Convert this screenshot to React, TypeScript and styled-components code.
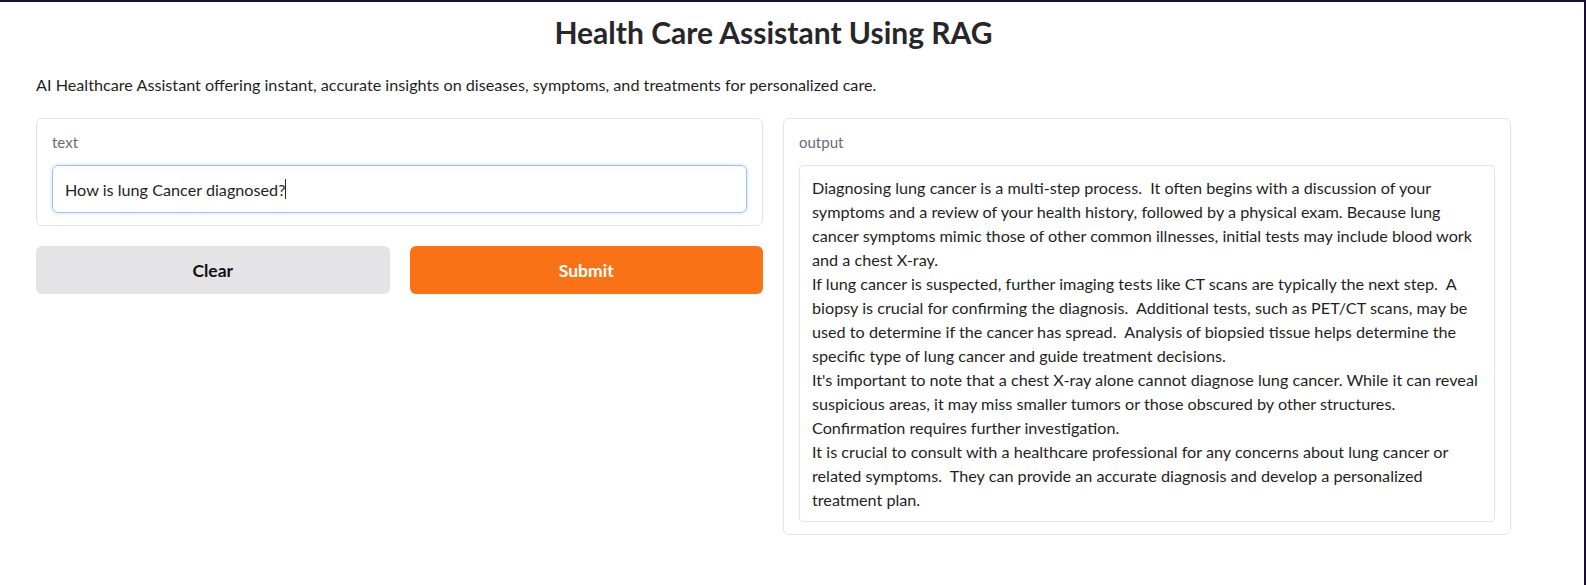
import React from "react";
import styled, { createGlobalStyle } from "styled-components";

const Global = createGlobalStyle`
  html, body { margin: 0; padding: 0; background: #ffffff; }
  body { font-family: "Lato", "Noto Sans", sans-serif; color: #1f1f23; }
  * { box-sizing: border-box; }
`;

const Frame = styled.div`
  width: 1586px;
  height: 585px;
  border-top: 2px solid #170f35;
  border-right: 2px solid #170f35;
  background: #ffffff;
  overflow: hidden;
`;

const Container = styled.div`
  width: 1475px;
  margin-left: 36px;
  display: flex;
  flex-direction: column;
`;

const Title = styled.h1`
  margin: 12px 0 0 0;
  text-align: center;
  font-size: 30px;
  line-height: 36px;
  font-weight: 700;
  color: #27272a;
`;

const Description = styled.p`
  margin: 23px 0 0 0;
  font-size: 16.2px;
  line-height: 24px;
  color: #1f1f23;
`;

const Columns = styled.div`
  margin-top: 21px;
  display: grid;
  grid-template-columns: 727px 728px;
  column-gap: 20px;
  align-items: start;
`;

const Column = styled.div`
  display: flex;
  flex-direction: column;
  gap: 20px;
`;

const Card = styled.div`
  border: 1px solid #e4e4e7;
  border-radius: 6px;
  background: #ffffff;
  padding: 12px 15px 12px 15px;
  display: flex;
  flex-direction: column;
`;

const Label = styled.span`
  font-size: 15px;
  line-height: 22px;
  color: #6b6b73;
  margin-bottom: 12px;
`;

const Input = styled.div`
  height: 48px;
  border: 1px solid #93c5fd;
  border-radius: 6px;
  box-shadow: 0 0 0 2px #eef5ff;
  padding: 0 12px;
  display: flex;
  align-items: center;
  font-size: 16.2px;
  color: #1f1f23;
`;

const Caret = styled.span`
  display: inline-block;
  width: 1px;
  height: 20px;
  background: #27272a;
  vertical-align: middle;
`;

const ButtonRow = styled.div`
  display: grid;
  grid-template-columns: 1fr 1fr;
  column-gap: 20px;
`;

const Button = styled.button<{ $primary?: boolean }>`
  height: 48px;
  border: none;
  border-radius: 6px;
  font-family: "Lato", "Noto Sans", sans-serif;
  font-size: 17.5px;
  font-weight: 700;
  background: ${(p) => (p.$primary ? "#f97316" : "#e4e4e7")};
  color: ${(p) => (p.$primary ? "#ffffff" : "#111111")};
  cursor: pointer;
`;

const OutputBox = styled.div`
  border: 1px solid #e4e4e7;
  border-radius: 4px;
  padding: 10px 12px 9px 12px;
  font-size: 16.2px;
  line-height: 24px;
  color: #1f1f23;
`;

const Line = styled.div`
  white-space: pre;
`;

const outputLines = [
  "Diagnosing lung cancer is a multi-step process.  It often begins with a discussion of your",
  "symptoms and a review of your health history, followed by a physical exam. Because lung",
  "cancer symptoms mimic those of other common illnesses, initial tests may include blood work",
  "and a chest X-ray.",
  "If lung cancer is suspected, further imaging tests like CT scans are typically the next step.  A",
  "biopsy is crucial for confirming the diagnosis.  Additional tests, such as PET/CT scans, may be",
  "used to determine if the cancer has spread.  Analysis of biopsied tissue helps determine the",
  "specific type of lung cancer and guide treatment decisions.",
  "It's important to note that a chest X-ray alone cannot diagnose lung cancer. While it can reveal",
  "suspicious areas, it may miss smaller tumors or those obscured by other structures.",
  "Confirmation requires further investigation.",
  "It is crucial to consult with a healthcare professional for any concerns about lung cancer or",
  "related symptoms.  They can provide an accurate diagnosis and develop a personalized",
  "treatment plan.",
];

export default function App() {
  return (
    <Frame>
      <Global />
      <Container>
        <Title>Health Care Assistant Using RAG</Title>
        <Description>
          AI Healthcare Assistant offering instant, accurate insights on diseases, symptoms, and treatments for personalized care.
        </Description>
        <Columns>
          <Column>
            <Card>
              <Label>text</Label>
              <Input>
                How is lung Cancer diagnosed?
                <Caret />
              </Input>
            </Card>
            <ButtonRow>
              <Button>Clear</Button>
              <Button $primary>Submit</Button>
            </ButtonRow>
          </Column>
          <Column>
            <Card>
              <Label>output</Label>
              <OutputBox>
                {outputLines.map((l, i) => (
                  <Line key={i}>{l}</Line>
                ))}
              </OutputBox>
            </Card>
          </Column>
        </Columns>
      </Container>
    </Frame>
  );
}
